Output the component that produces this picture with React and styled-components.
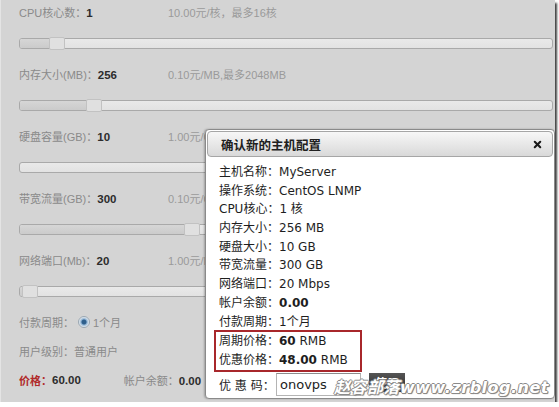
import styled, { createGlobalStyle } from 'styled-components';
import { X } from 'lucide-react';

const GlobalStyle = createGlobalStyle`
  body {
    margin: 0;
    background: #ffffff;
    font-family: "Liberation Sans", "Noto Sans CJK SC", sans-serif;
  }
`;

const configs = [
  { label: '核心数', pre: 'CPU', value: '1', price: '10.00元/核，最多16核', handle: 29, fill: 29 },
  { label: '内存大小(MB)', value: '256', price: '0.10元/MB,最多2048MB', handle: 66, fill: 66 },
  { label: '硬盘容量(GB)', value: '10', price: '1.00元/GB', handle: 320, fill: 0 },
  { label: '带宽流量(GB)', value: '300', price: '0.10元/GB', handle: 164, fill: 164 },
  { label: '网络端口(Mb)', value: '20', price: '1.00元/Mb', handle: 2, fill: 2 },
];

const summary = [
  { label: '主机名称', value: 'MyServer' },
  { label: '操作系统', value: 'CentOS LNMP' },
  { label: 'CPU核心', value: '1 核' },
  { label: '内存大小', value: '256 MB' },
  { label: '硬盘大小', value: '10 GB' },
  { label: '带宽流量', value: '300 GB' },
  { label: '网络端口', value: '20 Mbps' },
  { label: '帐户余额', strong: '0.00' },
  { label: '付款周期', value: '1个月' },
];

export default function App() {
  return (
    <>
      <GlobalStyle />
      <Frame>
        <Form>
          {configs.map((c) => (
            <ConfigItem key={c.label}>
              <LabelRow>
                <span>
                  {c.pre}{c.label}：<Value>{c.value}</Value>
                </span>
                <Price>{c.price}</Price>
              </LabelRow>
              <Track>
                <Range style={{ width: c.fill }} />
                <Handle style={{ left: c.handle }} />
              </Track>
            </ConfigItem>
          ))}
          <PlainRow>
            付款周期：<Radio />
            <RadioText>1个月</RadioText>
          </PlainRow>
          <PlainRow>用户级别：普通用户</PlainRow>
          <PlainRow>
            <TotalLabel>价格：</TotalLabel>
            <Value>60.00</Value>
            <Balance>
              帐户余额：<Value>0.00</Value>
            </Balance>
          </PlainRow>
        </Form>

        <Dialog>
          <DialogHeader>
            <DialogTitle>确认新的主机配置</DialogTitle>
            <X size={11} strokeWidth={4.5} color="#1a1a1a" />
          </DialogHeader>
          <DialogBody>
            {summary.map((s) => (
              <Line key={s.label}>
                {s.label}：{s.value}
                {s.strong && <Strong>{s.strong}</Strong>}
              </Line>
            ))}
            <PriceBox>
              <Line>
                周期价格：<Strong>60</Strong> RMB
              </Line>
              <Line>
                优惠价格：<Strong>48.00</Strong> RMB
              </Line>
            </PriceBox>
            <CouponRow>
              <CouponLabel>优 惠 码：</CouponLabel>
              <CouponInput defaultValue="onovps" />
              <UseButton>使用</UseButton>
            </CouponRow>
          </DialogBody>
        </Dialog>

        <Watermark>赵容部落www.zrblog.net</Watermark>
      </Frame>
    </>
  );
}

const Frame = styled.div`
  position: relative;
  width: 555px;
  height: 402px;
  overflow: hidden;
  background: #d4d4d4;
  border-left: 1px solid #e4e4e4;
  box-sizing: border-box;
  box-shadow: 2px 3px 2px rgba(0, 0, 0, 0.75);
`;

const Form = styled.div`
  display: flex;
  flex-direction: column;
  padding-left: 18px;
  font-size: 11px;
  color: #8a8a8a;
`;

const ConfigItem = styled.div`
  height: 62px;
  display: flex;
  flex-direction: column;
`;

const LabelRow = styled.div`
  height: 24px;
  display: grid;
  grid-template-columns: 149px auto;
  align-items: center;
  white-space: nowrap;
`;

const Value = styled.b`
  color: #2c2c2c;
  font-weight: bold;
  font-size: 11.5px;
`;

const Price = styled.span`
  color: #9a9a9a;
`;

const Track = styled.div`
  position: relative;
  margin-top: 14px;
  width: 534px;
  height: 11px;
  box-sizing: border-box;
  border: 1px solid #a9a9a9;
  border-radius: 3px;
  background: linear-gradient(#e9e9e9, #e2e2e2);
`;

const Range = styled.div`
  height: 100%;
  background: linear-gradient(#d6d6d6, #cbcbcb);
  border-radius: 2px 0 0 2px;
`;

const Handle = styled.div`
  position: absolute;
  top: -2px;
  width: 16px;
  height: 13px;
  box-sizing: border-box;
  border: 1px solid #c2c2c2;
  border-radius: 2px;
  background: #e0e0e0;
`;

const PlainRow = styled.div`
  height: 24px;
  display: flex;
  align-items: center;
  white-space: nowrap;
  & + & {
    margin-top: 5px;
  }
`;

const Radio = styled.span`
  width: 10px;
  height: 10px;
  margin-left: 4px;
  border-radius: 50%;
  border: 1px solid #9aa7b3;
  background: radial-gradient(circle, #2f5f8c 0 2px, #8fb3d4 3px, #e9eef2 5px);
`;

const RadioText = styled.span`
  margin-left: 3px;
`;

const TotalLabel = styled.b`
  color: #b12b2b;
`;

const Balance = styled.span`
  margin-left: 43px;
`;

const Dialog = styled.div`
  position: absolute;
  left: 204px;
  top: 129px;
  width: 350px;
  height: 270px;
  box-sizing: border-box;
  padding: 1px;
  background: #ffffff;
  border: 1px solid #8a8a8a;
  border-radius: 4px;
  box-shadow: -1px 0 2px rgba(0, 0, 0, 0.25);
  font-family: "DejaVu Sans", "Noto Sans CJK SC", sans-serif;
  font-size: 12px;
  color: #1e1e1e;
`;

const DialogHeader = styled.div`
  height: 26px;
  display: flex;
  align-items: center;
  justify-content: space-between;
  padding: 0 9px 0 13px;
  box-sizing: border-box;
  border: 1px solid #a6a6a6;
  border-radius: 4px;
  background: linear-gradient(#f7f7f7, #d9d9d9);
`;

const DialogTitle = styled.span`
  font-family: "Noto Sans CJK SC", sans-serif;
  font-weight: bold;
  font-size: 12.5px;
  color: #202020;
`;

const DialogBody = styled.div`
  padding: 6px 0 0 12px;
`;

const Line = styled.div`
  height: 18.7px;
  line-height: 18.7px;
  white-space: nowrap;
`;

const Strong = styled.b`
  font-weight: bold;
`;

const PriceBox = styled.div`
  width: 138px;
  margin-left: -5px;
  padding: 0 3px;
  border: 2px solid #a8272b;
  box-sizing: content-box;
  margin-top: -1px;
`;

const CouponRow = styled.div`
  display: flex;
  align-items: center;
  margin-top: 1px;
  white-space: nowrap;
`;

const CouponLabel = styled.span`
  width: 57px;
`;

const CouponInput = styled.input`
  width: 85px;
  height: 23px;
  box-sizing: border-box;
  padding: 0 3px;
  border: 1px solid #b4b4b4;
  border-top-color: #8c8c8c;
  font-family: "DejaVu Sans", sans-serif;
  font-size: 13px;
  color: #222;
  outline: none;
`;

const UseButton = styled.span`
  margin-left: 8px;
  margin-top: -4px;
  padding: 1px 6px;
  background: linear-gradient(#555, #2a2a2a);
  color: #ffffff;
  font-family: "Noto Sans CJK SC", sans-serif;
  font-weight: bold;
  font-size: 12px;
`;

const Watermark = styled.div`
  position: absolute;
  right: 6px;
  bottom: 4px;
  font-family: "DejaVu Sans", "Noto Sans CJK SC", sans-serif;
  font-weight: bold;
  font-style: italic;
  font-size: 16px;
  letter-spacing: 0.5px;
  color: #ffffff;
  text-shadow:
    1px 0 0 #8a8a8a,
    -1px 0 0 #8a8a8a,
    0 1px 0 #8a8a8a,
    0 -1px 0 #8a8a8a,
    1px 1px 1px #777;
`;
